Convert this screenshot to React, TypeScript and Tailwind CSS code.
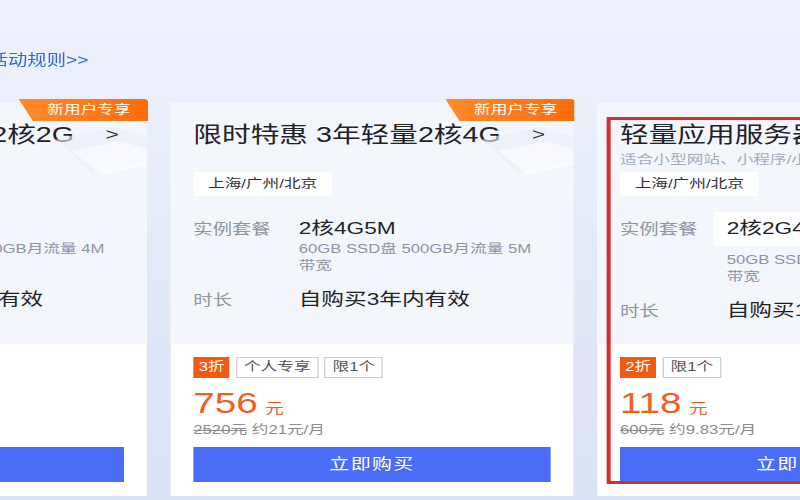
import React from "react";

type Plan = {
  title: string;
  subtitle?: string;
  spec: string;
  specSub: string;
  duration: string;
  discount: string;
  tags: string[];
  price: string;
  original: string;
  monthly: string;
  badge?: boolean;
  highlight?: boolean;
};

const PLANS: Plan[] = [
  {
    title: "限时特惠 1年轻量2核2G",
    spec: "2核2G4M",
    specSub: "40GB SSD盘 300GB月流量 4M 带宽",
    duration: "自购买1年内有效",
    discount: "4折",
    tags: ["个人专享", "限1个"],
    price: "288",
    original: "720元",
    monthly: "约24元/月",
    badge: true,
  },
  {
    title: "限时特惠 3年轻量2核4G",
    spec: "2核4G5M",
    specSub: "60GB SSD盘 500GB月流量 5M 带宽",
    duration: "自购买3年内有效",
    discount: "3折",
    tags: ["个人专享", "限1个"],
    price: "756",
    original: "2520元",
    monthly: "约21元/月",
    badge: true,
  },
  {
    title: "轻量应用服务器 2核2G",
    subtitle: "适合小型网站、小程序/小游戏等场景",
    spec: "2核2G4M",
    specSub: "50GB SSD盘 300GB月流量 4M 带宽",
    duration: "自购买1年内有效",
    discount: "2折",
    tags: ["限1个"],
    price: "118",
    original: "600元",
    monthly: "约9.83元/月",
    highlight: true,
  },
];

function Badge() {
  return (
    <>
      {/* soft decoration under the ribbon */}
      <svg
        className="pointer-events-none absolute right-0 top-[18px] h-[62px] w-[78px]"
        viewBox="0 0 78 62"
      >
        <polygon points="10,18 52,6 78,16 78,40 36,52" fill="#e9eefc" opacity="0.6" />
        <polygon points="22,30 58,20 78,28 78,44 44,54" fill="#ffffff" opacity="0.55" />
      </svg>
      <div className="absolute -top-[4px] right-[-1px] flex h-[22px] w-[97px] items-center justify-end rounded-tr-[3px] bg-gradient-to-r from-[#ff8a2c] to-[#ff6c02] pr-[13px] text-[12.5px] leading-[22px] text-white [clip-path:polygon(0_0,100%_0,100%_100%,11%_100%)]">
        新用户专享
      </div>
    </>
  );
}

function Card({ p }: { p: Plan }) {
  const hl = !!p.highlight;
  return (
    <div className="relative flex h-[393px] w-[302px] shrink-0 flex-col bg-white">
      {p.badge && <Badge />}

      {/* Top: spec */}
      <div className="flex h-[241px] flex-col bg-[#f3f6fd] px-[17px] pt-[18px]">
        <div className="flex h-[28px] items-center">
          <span className="whitespace-nowrap text-[21.5px] leading-[28px] text-[#1f2329]">{p.title}</span>
          {p.badge && <span className="relative ml-auto mr-[4px] text-[17px] font-medium text-[#333]">&gt;</span>}
        </div>
        {p.subtitle && (
          <div className="mt-[3px] whitespace-nowrap text-[12.5px] leading-[16px] text-[#a4abbd]">{p.subtitle}</div>
        )}
        <div className={hl ? "mt-[4px] flex" : "mt-[23px] flex"}>
          <span className="h-[24px] bg-white px-[11px] text-[12.5px] leading-[24px] text-[#333]">上海/广州/北京</span>
        </div>

        <div className={hl ? "mt-[16px] flex" : "mt-[21px] flex"}>
          <span
            className={
              hl
                ? "w-[70px] shrink-0 text-[14.5px] leading-[34px] text-[#8e94a4]"
                : "w-[79px] shrink-0 text-[14.5px] leading-[24px] text-[#8e94a4]"
            }
          >
            实例套餐
          </span>
          <div className="min-w-0 flex-1">
            {hl ? (
              <div className="h-[34px] whitespace-nowrap bg-white px-[10px] text-[17px] leading-[34px] text-[#1f2329]">
                {p.spec}
              </div>
            ) : (
              <div className="text-[17px] leading-[24px] text-[#1f2329]">{p.spec}</div>
            )}
            <div
              className={
                hl
                  ? "mt-[5.5px] w-[186px] pl-[10px] text-[12.5px] leading-[17px] text-[#8c94a8]"
                  : "w-[186px] text-[12.5px] leading-[17px] text-[#8c94a8]"
              }
            >
              {p.specSub}
            </div>
          </div>
        </div>

        <div className={hl ? "mt-[13.5px] flex" : "mt-[12.5px] flex"}>
          <span
            className={
              hl
                ? "w-[70px] shrink-0 text-[14.5px] leading-[24px] text-[#8e94a4]"
                : "w-[79px] shrink-0 text-[14.5px] leading-[24px] text-[#8e94a4]"
            }
          >
            时长
          </span>
          <span
            className={
              hl
                ? "whitespace-nowrap pl-[10px] text-[17px] leading-[24px] text-[#1f2329]"
                : "whitespace-nowrap text-[17px] leading-[24px] text-[#1f2329]"
            }
          >
            {p.duration}
          </span>
        </div>
      </div>

      {/* Bottom: price */}
      <div className="flex flex-1 flex-col px-[17px] pt-[13px]">
        <div className="flex gap-[4.5px]">
          <span className="h-[21px] bg-[#f15a10] px-[4px] text-[12.5px] leading-[21px] text-white">{p.discount}</span>
          {p.tags.map((t) => (
            <span
              key={t}
              className="h-[21px] border border-[#cfcfcf] bg-white px-[5px] text-[12.5px] leading-[19px] text-[#555]"
            >
              {t}
            </span>
          ))}
        </div>
        <div className="mt-[8px] flex h-[34px] items-baseline text-[#f0601f]">
          <span className="text-[29px] leading-[34px]">{p.price}</span>
          <span className="ml-[5.5px] text-[14px]">元</span>
        </div>
        <div className="mt-[1px] whitespace-nowrap text-[12.5px] leading-[18px] text-[#8b8b8b]">
          <span className="line-through">{p.original}</span> {p.monthly}
        </div>
        <button className="mt-[8px] h-[35px] w-full bg-[#4b6cf6] text-[15px] tracking-[1px] text-white">立即购买</button>
      </div>

      {hl && (
        <div className="pointer-events-none absolute bottom-[12px] left-[7px] right-[7px] top-[14px] border-[3px] border-[#d52f2b]" />
      )}
    </div>
  );
}

export default function App() {
  return (
    <div className="h-[500px] w-[800px] overflow-hidden bg-gradient-to-b from-[#eef2fc] to-[#d9e2f5] font-['Liberation_Sans','Noto_Sans_CJK_SC',sans-serif]">
      <div className="w-[600px] origin-top-left scale-x-[1.3333]">
        <div className="pt-[50px]">
          <a className="-ml-[37.5px] block whitespace-nowrap text-[14.5px] leading-[20px] text-[#3468d6]">查看活动规则&gt;&gt;</a>
        </div>
        <div className="-ml-[192px] mt-[33px] flex gap-[18px]">
          {PLANS.map((p) => (
            <Card key={p.title} p={p} />
          ))}
        </div>
      </div>
    </div>
  );
}
